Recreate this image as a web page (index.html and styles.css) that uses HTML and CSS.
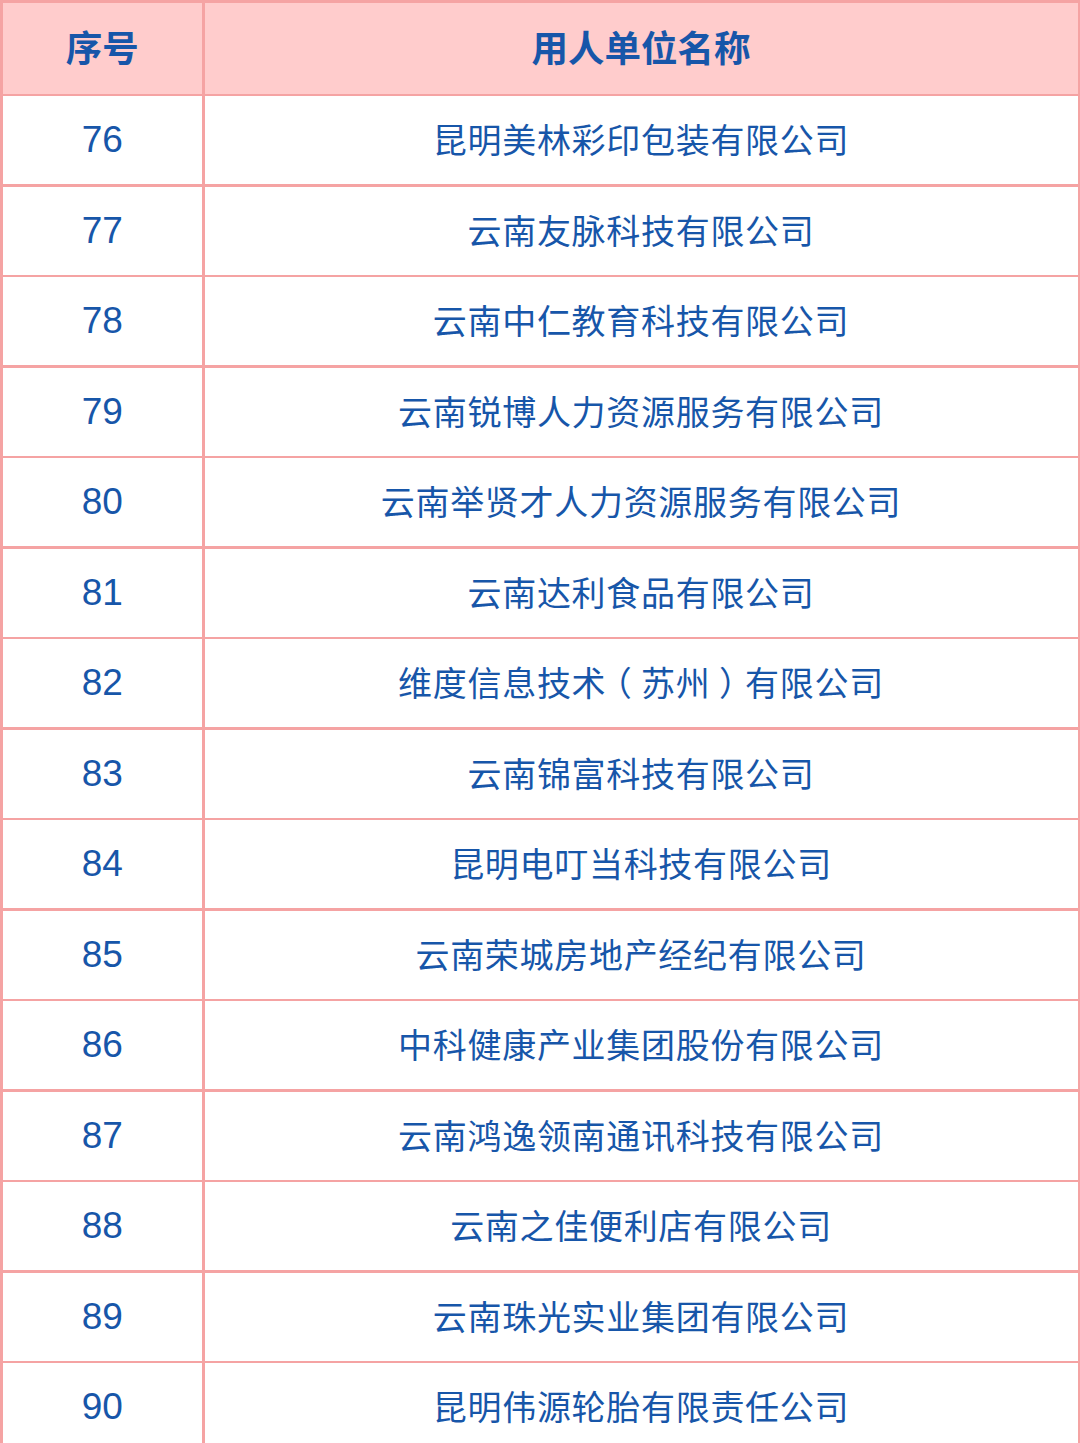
FILE: index.html
```html
<!DOCTYPE html>
<html lang="zh-CN">
<head>
<meta charset="utf-8">
<title>用人单位名称</title>
<link rel="stylesheet" href="styles.css">
</head>
<body>
<div class="table">
  <div class="cell head">序号</div>
  <div class="cell head">用人单位名称</div>
  <div class="cell num">76</div><div class="cell name">昆明美林彩印包装有限公司</div>
  <div class="cell num">77</div><div class="cell name">云南友脉科技有限公司</div>
  <div class="cell num">78</div><div class="cell name">云南中仁教育科技有限公司</div>
  <div class="cell num">79</div><div class="cell name">云南锐博人力资源服务有限公司</div>
  <div class="cell num">80</div><div class="cell name">云南举贤才人力资源服务有限公司</div>
  <div class="cell num">81</div><div class="cell name">云南达利食品有限公司</div>
  <div class="cell num">82</div><div class="cell name">维度信息技术<span class="paren">（</span>苏州<span class="paren">）</span>有限公司</div>
  <div class="cell num">83</div><div class="cell name">云南锦富科技有限公司</div>
  <div class="cell num">84</div><div class="cell name">昆明电叮当科技有限公司</div>
  <div class="cell num">85</div><div class="cell name">云南荣城房地产经纪有限公司</div>
  <div class="cell num">86</div><div class="cell name">中科健康产业集团股份有限公司</div>
  <div class="cell num">87</div><div class="cell name">云南鸿逸领南通讯科技有限公司</div>
  <div class="cell num">88</div><div class="cell name">云南之佳便利店有限公司</div>
  <div class="cell num">89</div><div class="cell name">云南珠光实业集团有限公司</div>
  <div class="cell num">90</div><div class="cell name">昆明伟源轮胎有限责任公司</div>
</div>
</body>
</html>
```
FILE: styles.css
```css
html, body {
  margin: 0;
  padding: 0;
  overflow: hidden;
  background: #ffffff;
}
.table {
  width: 1080px;
  box-sizing: border-box;
  display: grid;
  grid-template-columns: 199.5px 1fr;
  grid-template-rows: 91px;
  grid-auto-rows: 88px;
  gap: 2.5px;
  padding: 2.5px 2.5px 0 2.5px;
  background: #f5a3a3;
  font-family: "Liberation Sans", "Noto Sans CJK SC", sans-serif;
  color: #1756a9;
}
.cell {
  background: #ffffff;
  display: flex;
  align-items: center;
  justify-content: center;
  font-size: 34px;
  line-height: 1;
}
.head {
  background: #ffcccc;
  font-family: "Noto Sans CJK SC", sans-serif;
  font-weight: 700;
  font-size: 36.5px;
  padding-bottom: 2px;
}
.num {
  font-size: 37px;
  padding-bottom: 1px;
}
.name {
  font-family: "Noto Sans CJK SC", sans-serif;
  font-size: 34px;
  letter-spacing: 0.7px;
  padding-bottom: 2px;
}
.paren {
  font-feature-settings: "halt" 1;
  padding: 0 0.25em;
}
```
